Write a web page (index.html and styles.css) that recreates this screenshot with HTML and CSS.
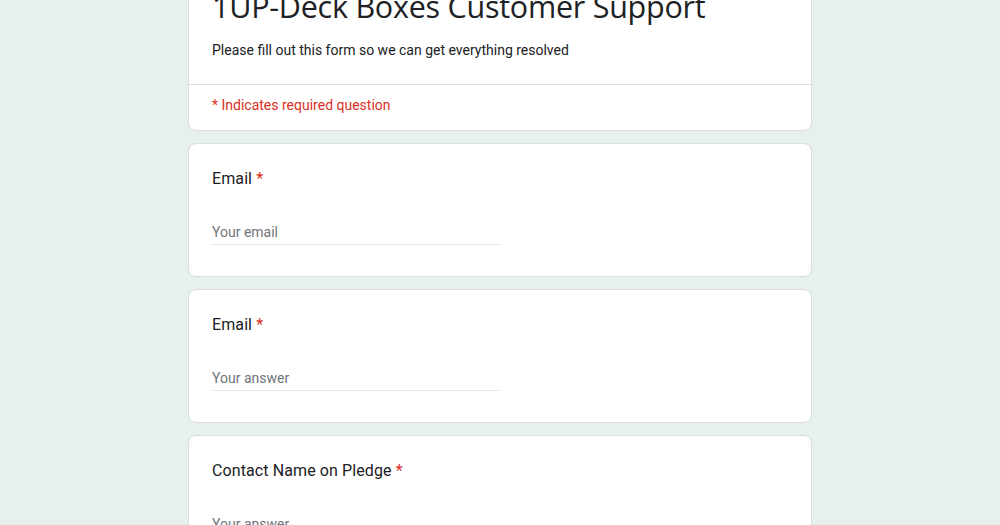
FILE: index.html
```html
<!DOCTYPE html>
<html lang="en">
<head>
<meta charset="utf-8">
<title>1UP-Deck Boxes Customer Support</title>
<link rel="stylesheet" href="styles.css">
</head>
<body>
<main class="form">
  <section class="card header-card">
    <div class="header-main">
      <h1 class="title">1UP-Deck Boxes Customer Support</h1>
      <p class="desc">Please fill out this form so we can get everything resolved</p>
    </div>
    <div class="header-note">* Indicates required question</div>
  </section>

  <section class="card question">
    <div class="label">Email <span class="req">*</span></div>
    <div class="input">Your email</div>
  </section>

  <section class="card question">
    <div class="label">Email <span class="req">*</span></div>
    <div class="input">Your answer</div>
  </section>

  <section class="card question">
    <div class="label">Contact Name on Pledge <span class="req">*</span></div>
    <div class="input">Your answer</div>
  </section>
</main>
</body>
</html>
```

FILE: styles.css
```css
html, body {
  margin: 0;
  padding: 0;
}
body {
  background: #e6f0ec;
  font-family: Roboto, "Liberation Sans", sans-serif;
  color: #202124;
}
.form {
  width: 624px;
  margin: -43px auto 0;
  display: flex;
  flex-direction: column;
  gap: 12px;
  padding-bottom: 40px;
}
.card {
  background: #fff;
  border: 1px solid #dadce0;
  border-radius: 8px;
}
.header-main {
  padding: 28px 23px 24px;
  border-bottom: 1px solid #e0e0e0;
}
.title {
  margin: 0;
  font-family: "Open Sans", Roboto, sans-serif;
  font-weight: 400;
  font-size: 30.5px;
  line-height: 40px;
  letter-spacing: -0.25px;
}
.desc {
  margin: 14px 0 0;
  font-size: 14px;
  line-height: 20px;
}
.header-note {
  padding: 10px 23px 15px;
  font-size: 14px;
  line-height: 20px;
  color: #d93025;
}
.question {
  padding: 23px 23px 31px;
}
.label {
  font-size: 16px;
  line-height: 24px;
  letter-spacing: 0.1px;
}
.req {
  color: #d93025;
}
.input {
  margin-top: 29px;
  width: 288px;
  font-size: 14px;
  line-height: 24px;
  color: #70757a;
  border-bottom: 1px solid #e8e8e8;
}
```
